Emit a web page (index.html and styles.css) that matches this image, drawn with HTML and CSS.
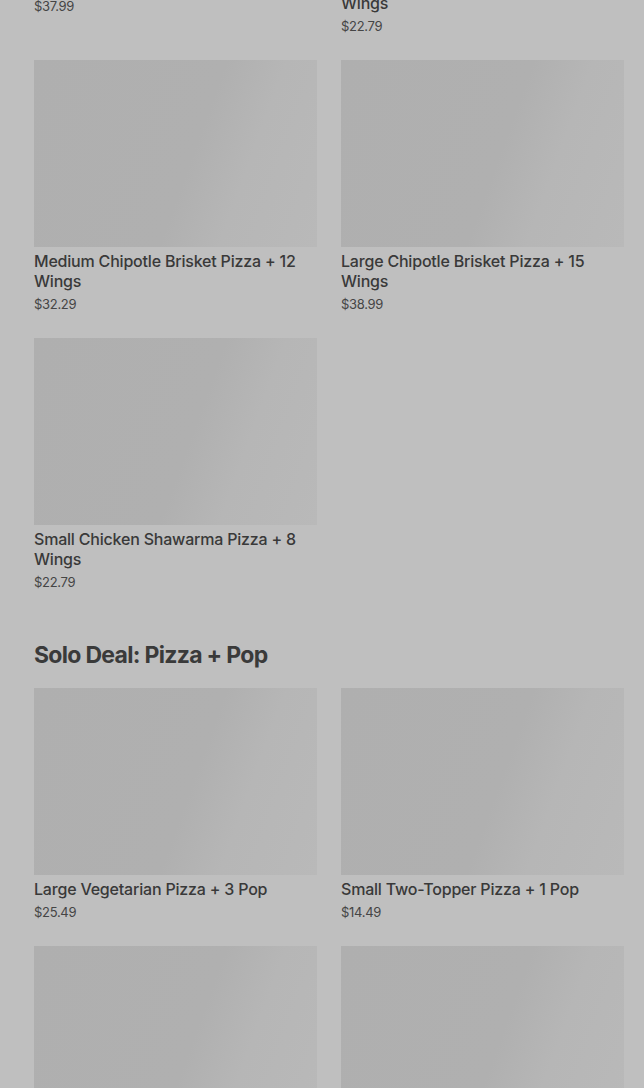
FILE: index.html
```html
<!DOCTYPE html>
<html lang="en">
<head>
    <meta charset="UTF-8">
    <meta name="viewport" content="width=device-width, initial-scale=1.0">
    <title>Deals</title>
    <link rel="stylesheet" href="styles.css">
</head>
<body>

    <div class="page">
        <!-- Pizza + Wings -->
        <div class="section">
            <div class="grid">
                <div class="card">
                    <div class="thumb"></div>
                    <div class="card-title">Large Pizza + 15 Wings</div>
                    <div class="card-price">$37.99</div>
                </div>
                <div class="card">
                    <div class="thumb"></div>
                    <div class="card-title">Small Chipotle Brisket Pizza + 8 Wings</div>
                    <div class="card-price">$22.79</div>
                </div>
                <div class="card">
                    <div class="thumb"></div>
                    <div class="card-title">Medium Chipotle Brisket Pizza + 12 Wings</div>
                    <div class="card-price">$32.29</div>
                </div>
                <div class="card">
                    <div class="thumb"></div>
                    <div class="card-title">Large Chipotle Brisket Pizza + 15 Wings</div>
                    <div class="card-price">$38.99</div>
                </div>
                <div class="card">
                    <div class="thumb"></div>
                    <div class="card-title">Small Chicken Shawarma Pizza + 8 Wings</div>
                    <div class="card-price">$22.79</div>
                </div>
            </div>
        </div>

        <!-- Solo Deal -->
        <div class="section">
            <h2 class="section-title">Solo Deal: Pizza + Pop</h2>
            <div class="grid">
                <div class="card">
                    <div class="thumb"></div>
                    <div class="card-title">Large Vegetarian Pizza + 3 Pop</div>
                    <div class="card-price">$25.49</div>
                </div>
                <div class="card">
                    <div class="thumb"></div>
                    <div class="card-title">Small Two-Topper Pizza + 1 Pop</div>
                    <div class="card-price">$14.49</div>
                </div>
                <div class="card">
                    <div class="thumb"></div>
                    <div class="card-title">Medium Two-Topper Pizza + 2 Pop</div>
                    <div class="card-price">$19.99</div>
                </div>
                <div class="card">
                    <div class="thumb"></div>
                    <div class="card-title">Large Two-Topper Pizza + 3 Pop</div>
                    <div class="card-price">$24.99</div>
                </div>
            </div>
        </div>
    </div>

</body>
</html>
```

FILE: styles.css
```css
* {
    margin: 0;
    padding: 0;
    box-sizing: border-box;
}
body {
    background-color: #bfbfbf;
    font-family: 'Inter', 'Roboto', sans-serif;
    color: #383838;
    overflow: hidden;
}
.page {
    margin-top: -218px;
    padding: 0 20px 0 34px;
}
.section {
    margin-bottom: 48px;
}
.section-title {
    font-size: 23px;
    font-weight: 700;
    line-height: 32px;
    letter-spacing: -0.7px;
    color: #3a3a3a;
    margin-bottom: 17px;
}
.grid {
    display: grid;
    grid-template-columns: 1fr 1fr;
    column-gap: 24px;
    row-gap: 25px;
    align-items: start;
}
.thumb {
    height: 187px;
    background: linear-gradient(110deg, #afafaf 0%, #b0b0b0 55%, #b6b6b6 72%, #b9b9b9 100%);
}
.card-title {
    margin-top: 4px;
    font-size: 16px;
    font-weight: 500;
    line-height: 20px;
    letter-spacing: -0.2px;
    color: #393939;
}
.card-price {
    margin-top: 4px;
    font-size: 13px;
    line-height: 18px;
    color: #454545;
    letter-spacing: -0.3px;
}
```
